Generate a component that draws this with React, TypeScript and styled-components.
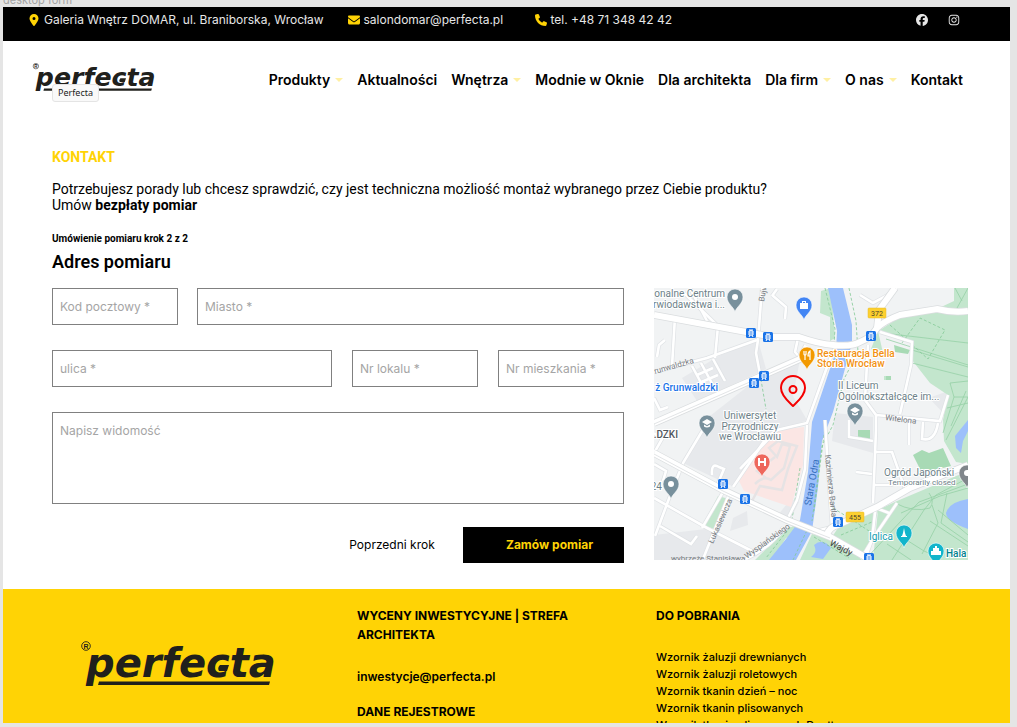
import React from "react";
import styled, { createGlobalStyle } from "styled-components";
import { FaEnvelope, FaFacebook, FaInstagram, FaLocationDot, FaPhone } from "react-icons/fa6";

const yellow = "#ffd305";
const brandFont = `Inter, "Open Sans", sans-serif`;
const bodyFont = `Roboto, "Liberation Sans", sans-serif`;

const GlobalStyle = createGlobalStyle`
  * { box-sizing: border-box; }
  body { margin: 0; background: #e5e5e5; color: #000; font-family: ${bodyFont}; }
  h1, h2, h3, p, ul { margin: 0; padding: 0; }
  ul { list-style: none; }
  a { color: inherit; text-decoration: none; }
`;

const Canvas = styled.div`
  display: flex;
  flex-direction: column;
  height: 100vh;
  padding: 0 7px 4px 3px;
  overflow: hidden;
`;

const FrameLabel = styled.div`
  display: flex;
  align-items: flex-end;
  height: 7px;
  flex: none;
  overflow: hidden;
  color: #a3a3a3;
  font: 11px/14px ${brandFont};
`;

const Frame = styled.div`
  flex: 1;
  min-height: 0;
  overflow: hidden;
  background: #fff;
`;

const TopBar = styled.div`
  display: flex;
  align-items: flex-start;
  height: 34px;
  padding: 4px 50px 0 25px;
  background: #000;
  color: #e6e6e6;
  font: 400 12px/18px ${brandFont};
`;

const ContactItem = styled.a`
  display: flex;
  align-items: center;
  gap: 4px;
  min-width: 163px;
  margin-right: 24px;
  white-space: nowrap;
  svg { color: ${yellow}; flex: none; }
`;

const Social = styled.div`
  display: flex;
  gap: 20px;
  margin-left: auto;
  a { display: flex; align-items: center; height: 17px; }
`;

const Header = styled.header`
  display: flex;
  align-items: center;
  justify-content: space-between;
  height: 79px;
  padding: 0 47px 2px 29px;
`;

const LogoLink = styled.a`
  position: relative;
  display: block;
  margin-bottom: 4px;
  svg { display: block; }
`;

const Tooltip = styled.span`
  position: absolute;
  left: 20px;
  top: 21px;
  padding: 0 5px;
  border: 1px solid #e4e4e4;
  border-radius: 3px;
  background: #f9f9f9;
  color: #222;
  font: 9px/16px "Noto Sans", sans-serif;
`;

const Nav = styled.nav`
  display: flex;
  gap: 14px;
  font: 600 14px/20px ${brandFont};
  a { display: flex; align-items: center; gap: 5px; white-space: nowrap; }
`;

const Caret = styled.span`
  border: 4px solid transparent;
  border-top-color: #fff0a3;
  border-bottom: 0;
`;

const Main = styled.main`
  padding: 28px 42px 26px 49px;
`;

const Title = styled.h1`
  color: ${yellow};
  font-size: 14px;
  line-height: 18px;
`;

const Intro = styled.p`
  margin-top: 15px;
  font-size: 14px;
  line-height: 16px;
`;

const Step = styled.p`
  margin-top: 20px;
  font-size: 10px;
  font-weight: 700;
  line-height: 12px;
`;

const FormTitle = styled.h2`
  margin-top: 6px;
  font-size: 18px;
  font-weight: 600;
  line-height: 22px;
`;

const Columns = styled.div`
  display: grid;
  grid-template-columns: 572fr 314fr;
  gap: 30px;
  margin-top: 15px;
`;

const Form = styled.form`
  display: flex;
  flex-direction: column;
`;

const Fields = styled.div<{ $columns: string; $gap: number }>`
  display: grid;
  grid-template-columns: ${(p) => p.$columns};
  gap: ${(p) => p.$gap}px;
  margin-bottom: 25px;
`;

const fieldStyle = `
  display: block;
  width: 100%;
  min-width: 0;
  padding: 0 7px;
  border: 1px solid #808080;
  border-radius: 0;
  background: #fff;
  font: 400 12px/16px ${brandFont};
  &::placeholder { color: #a5a5a5; opacity: 1; }
`;

const Input = styled.input`
  ${fieldStyle}
  height: 37px;
`;

const Message = styled.textarea`
  ${fieldStyle}
  height: 92px;
  padding-top: 10px;
  resize: none;
`;

const Actions = styled.div`
  display: flex;
  justify-content: flex-end;
  gap: 4px;
  margin-top: 23px;
`;

const Button = styled.button<{ $primary?: boolean }>`
  width: ${(p) => (p.$primary ? 161 : 134)}px;
  height: 36px;
  padding: 0 0 0 ${(p) => (p.$primary ? 12 : 0)}px;
  border: 0;
  background: ${(p) => (p.$primary ? "#000" : "transparent")};
  color: ${(p) => (p.$primary ? yellow : "#000")};
  font: ${(p) => (p.$primary ? 700 : 400)} 12px/16px ${brandFont};
`;

const MapSvg = styled.svg`
  display: block;
  width: 100%;
  height: auto;
  font-family: ${bodyFont};
`;

const Footer = styled.footer`
  display: grid;
  grid-template-columns: 198fr 221fr 354fr;
  column-gap: 78px;
  min-height: 160px;
  padding: 17px 0 0 78px;
  background: ${yellow};
  font: 500 11px/17px ${brandFont};
`;

const FooterLogo = styled.div`
  padding-top: 35px;
  svg { display: block; }
`;

const FooterHeading = styled.h3`
  font-size: 12px;
  font-weight: 700;
  line-height: 19px;
`;

const FooterMail = styled.a`
  display: block;
  margin: 23px 0 16px;
  font-size: 12px;
  font-weight: 600;
  line-height: 19px;
`;

const LinkList = styled.ul`
  margin-top: 24px;
  li { height: 17px; }
`;

const Logo = ({ width }: { width: number }) => (
  <svg width={width} height={Math.round(width * 0.235)} viewBox="0 0 196 46" role="img" aria-label="Perfecta">
    <g fill="#20201c">
      <circle cx="5" cy="5" r="4.3" fill="none" stroke="#20201c" strokeWidth="0.9" />
      <text x="5" y="7.6" textAnchor="middle" fontFamily="Liberation Sans, sans-serif" fontWeight="700" fontSize="7">R</text>
      <text x="5" y="36" fontFamily="DejaVu Sans, sans-serif" fontWeight="700" fontStyle="italic" fontSize="40">perfecta</text>
      <path d="M139 24H148L146 30H138Q136 27 139 24Z" />
      <path d="M18 40.5H189L188 44H17Z" />
    </g>
  </svg>
);

type PinProps = { x: number; y: number; color: string; kind?: string };

const Pin = ({ x, y, color, kind = "dot" }: PinProps) => (
  <g transform={`translate(${x} ${y})`}>
    <path d="M0 15C-1 10-8 7-8 0A8 8 0 0 1 8 0C8 7 1 10 0 15Z" fill={color} stroke="#fff" strokeWidth="0.6" />
    {kind === "dot" && <circle r="3" fill="#fff" />}
    {kind === "school" && <path d="M-5-1L0-4L5-1L0 2ZM-3 1.500V3.500Q0 5.500 3 3.500V1.500L0 3.200Z" fill="#fff" />}
    {kind === "bag" && <path d="M-4-2H-2V-4H2V-2H4V4H-4ZM-1-3V-2H1V-3Z" fill="#fff" fillRule="evenodd" />}
    {kind === "food" && <path d="M-3-4V-1Q-3 0-2 0V5M-1-4V-1Q-1 0-2 0M3 5V-4Q1-3 1 1H3" fill="none" stroke="#fff" strokeWidth="1.2" />}
    {kind === "hospital" && <path d="M-3-4V4M3-4V4M-3 0H3" fill="none" stroke="#fff" strokeWidth="2" />}
    {kind === "tower" && <path d="M0-5L1 0L2 3H3V4H-3V3H-2L-1 0Z" fill="#fff" />}
    {kind === "hall" && <path d="M-1-5H1V-3H3V0H5V4H-5V0H-3V-3H-1Z" fill="#fff" />}
  </g>
);

const stops = [[97, 45], [114, 49], [110, 88], [100, 95], [217, 48], [69, 196], [91, 211], [184, 234], [215, 270]];

const mainRoads = [
  "M0 165L69 202L133 232L176 249L213 270",
  "M0 135L146 71L153 58",
  "M0 27L103 46L120 49L145 49Q165 56 179 57Q198 59 206 54Q217 50 223 40Q230 33 246 27L283 21Q299 25 314 23",
  "M223 40L225 22L241 0",
  "M173 247Q175 239 184 237L223 219L256 200L314 177",
];

const sideRoads = [
  "M21 29L18 78", "M36 0L53 33", "M30 5L64 38L61 70", "M0 84L53 70L103 52", "M108 0L104 52L102 65L106 86",
  "M118 7L132 19L131 31M118 8L123 1", "M144 50L141 64L149 73", "M38 78L52 104M47 75L61 101M59 71L71 93M43 87L59 80M45 95L64 87",
  "M3 69L5 57L11 52M0 110L6 122L14 119M0 145L8 151L0 165", "M79 199L113 149L123 142L153 135L173 79L181 59",
  "M153 137L151 181L143 212L133 232", "M86 181L123 142", "M74 209L49 271M69 204L48 240",
  "M0 210L53 240L98 263", "M1 248L16 208L29 175L56 130", "M58 187Q57 174 65 179L70 181L64 195",
  "M129 239Q121 257 92 271", "M0 176L12 183L9 193", "M6 238L37 256L43 248",
  "M214 57L211 112L222 127L222 142L219 215", "M222 127L286 133L294 107", "M226 44L258 54L257 77L246 126",
  "M243 0L232 8L219 15L206 7", "M222 164L238 164L251 201M222 216L218 252L211 271M243 215L220 249L207 271M222 220L235 225",
  "M202 184L218 186M221 197L237 197L245 194M195 132V149L219 153M255 130V157M269 134L268 151Q281 154 284 135",
  "M171 132L174 181L178 239L158 244",
];

const LocationMap = () => (
  <MapSvg viewBox="0 0 314 272" role="img" aria-label="Mapa Wrocławia">
    <rect width="314" height="272" fill="#f1f3f4" />
    <g fill="#e7e9ec">
      <path d="M65 68L104 52L112 81L43 113L28 90Z" />
      <path d="M112 84L146 72L139 108L153 132L124 143L78 198L29 175L56 128Z" />
      <path d="M0 247L52 241L98 263L84 272H0Z" />
      <path d="M181 125L219 129V165L178 153ZM137 211L145 214L136 232L124 227Z" />
      <path d="M79 230L93 223L94 237L76 243ZM275 110L294 103L291 127Z" />
    </g>
    <g fill="#c3e6cd">
      <path d="M226 42L246 29L283 24L314 26V176L302 174L290 153L289 132L294 107L276 95L258 72L257 54Z" />
      <path d="M300 0H314V21L285 20L300 13ZM167 3L177 0L181 50L176 53L176 29L166 25Z" />
      <path d="M314 183V272H219L224 222L243 213ZM184 240L224 222L213 270L178 249ZM146 272L158 246L177 251L211 272Z" />
      <path d="M118 272L132 250L154 241L148 232L133 242L111 262L101 272Z" />
      <path d="M64 208L75 211L60 241L49 237ZM230 88H237V92H230Z" />
      <path d="M224 43L229 65L217 61Z" />
    </g>
    <path d="M174 0H189L198 37V55L189 88L179 124L168 153L164 199L158 243L142 272H115L132 251L146 232L154 184L158 134L182 63L183 43Z" fill="#9dc0fb" />
    <path d="M314 211Q295 214 292 225Q292 233 314 241ZM314 132L301 148L302 160L307 165L309 153L314 143ZM160 257Q169 249 177 260L169 271L157 269Q164 264 160 257Z" fill="#9dc0fb" />
    <path d="M85 193L113 149L123 142L150 139L149 177L137 219L90 203Z" fill="#fbe6e4" />
    <path d="M259 167L268 162L275 165L289 160L297 178L268 185Z" fill="#a8dab5" />
    <path d="M240 57L256 62L254 66L241 64ZM204 142H216V151H204ZM232 88H237V92H232Z" fill="#a8dab5" />
    <path d="M101 196Q110 187 117 192L130 180L136 158L128 156L123 169L115 160L124 153L143 158L134 181L128 202L106 198L98 213M112 190L103 183L121 169" fill="none" stroke="#e6e3e4" strokeWidth="2.500" />
    <g fill="none" stroke="#95d1a6" strokeWidth="0.8">
      <path d="M229 45L314 55M232 51L314 77M258 62L314 79M258 75L314 89M301 0L308 13M314 0L303 20" />
      <path d="M289 145L300 109L296 95L314 93M293 120L314 115M297 138L312 103M292 152L314 109M300 109H314" />
      <path d="M211 272L247 233L265 214L314 196M238 272L270 222L282 207L314 190M247 225L286 208L314 200M243 246L270 263L286 270M233 256L257 272M284 222L314 247M276 233L314 258M278 217L284 235L268 266M293 205L287 235L314 254" />
      <path d="M241 215Q260 225 276 220Q281 213 275 205" />
    </g>
    <g fill="none" stroke="#83c995" strokeWidth="0.8" strokeDasharray="3 2">
      <path d="M171 0L181 41L180 56M195 0L202 33L204 64L190 91L179 137L168 158L158 233M155 238L139 272M146 180L137 238L112 270" />
      <path d="M236 37L274 71L291 42L266 30L248 55M106 86L112 121M179 220L200 233L215 243M160 249L195 270M187 247L218 234M172 132L160 223" />
    </g>
    <g fill="none" stroke="#dfe2e5" strokeWidth="4">{sideRoads.map((d) => <path key={d} d={d} />)}</g>
    <g fill="none" stroke="#fff" strokeWidth="2.600">{sideRoads.map((d) => <path key={d} d={d} />)}</g>
    <g fill="none" stroke="#dadddf" strokeWidth="7.500">{mainRoads.map((d) => <path key={d} d={d} />)}</g>
    <g fill="none" stroke="#fff" strokeWidth="6">{mainRoads.map((d) => <path key={d} d={d} />)}</g>
    <path d="M0 166L69 203L133 233L176 250M0 136L146 72" fill="none" stroke="#dadddf" strokeWidth="0.8" />

    <g fill="#6d7f88" fontSize="10" stroke="#fff" strokeWidth="2" paintOrder="stroke">
      <text x="71" y="9" textAnchor="end">onalne Centrum</text>
      <text x="71" y="20" textAnchor="end">rwiodawstwa i...</text>
      <text x="184" y="101">II Liceum</text>
      <text x="184" y="112">Ogólnokształcące im...</text>
      <text x="96" y="131" textAnchor="middle">Uniwersytet</text>
      <text x="96" y="142" textAnchor="middle">Przyrodniczy</text>
      <text x="96" y="152" textAnchor="middle">we Wrocławiu</text>
      <text x="8" y="202" textAnchor="end">24</text>
      <text x="230" y="188">Ogród Japoński</text>
      <text x="234" y="197" fontSize="8">Temporarily closed</text>
      <g fill="#f29111" fontWeight="500">
        <text x="163" y="69">Restauracja Bella</text>
        <text x="163" y="79">Storia Wrocław</text>
      </g>
      <text x="64" y="103" textAnchor="end" fill="#1a73e8" fontWeight="500">ż Grunwaldzki</text>
      <text x="24" y="150" textAnchor="end" fill="#50565c" fontWeight="500">.DZKI</text>
      <text x="215" y="252" fill="#129eaf">Iglica</text>
      <text x="292" y="269" fill="#00838f" fontWeight="500">Hala</text>
    </g>
    <g fill="#75797e" fontSize="8">
      <text transform="translate(1 86) rotate(-16)">runwaldzka</text>
      <text transform="translate(110 14) rotate(-80)">Bujw</text>
      <text transform="translate(231 132) rotate(7)">Witelona</text>
      <text transform="translate(171 167) rotate(84)">Kazimierza Bartla</text>
      <text transform="translate(59 256) rotate(-66)">Łukasiewicza</text>
      <text transform="translate(93 271) rotate(-36)">Wyspiańskiego</text>
      <text x="17" y="273">wybrzeże Stanisława</text>
      <text transform="translate(157 218) rotate(-80)" fill="#3870bd" fontSize="10">Stara Odra</text>
      <text transform="translate(175 257) rotate(27)" fill="#444" fontSize="9">Wajdy</text>
    </g>

    {[{ x: 214, y: 20, label: "372" }, { x: 192, y: 224, label: "455" }].map(({ x, y, label }) => (
      <g key={label} transform={`translate(${x} ${y})`}>
        <rect width="18" height="10" rx="1" fill="#fdd02f" stroke="#e5b82c" strokeWidth="0.5" />
        <text x="9" y="8" textAnchor="middle" fontSize="7" fill="#4d452d">{label}</text>
      </g>
    ))}
    {stops.map(([x, y]) => (
      <g key={`${x}-${y}`} transform={`translate(${x} ${y})`}>
        <rect x="-5" y="-5" width="10" height="10" rx="1.500" fill="#1a73e8" />
        <path d="M-2-3H2M0-3V-2M-2-2H2V2H-2ZM-2 4L-1 2M2 4L1 2M-2 0H2" fill="none" stroke="#fff" strokeWidth="1" />
      </g>
    ))}
    <Pin x={81} y={9} color="#78909c" />
    <Pin x={150} y={17} color="#4285f4" kind="bag" />
    <Pin x={153} y={67} color="#f29900" kind="food" />
    <Pin x={53} y={135} color="#78909c" kind="school" />
    <Pin x={108} y={174} color="#ee675c" kind="hospital" />
    <Pin x={17} y={196} color="#78909c" />
    <Pin x={201} y={123} color="#78909c" kind="school" />
    <Pin x={250} y={245} color="#12b5cb" kind="tower" />
    <Pin x={282} y={263} color="#12b5cb" kind="hall" />
    <Pin x={313} y={185} color="#80868b" />
    <g fill="none" stroke="#f40000" strokeWidth="2">
      <path d="M139 118C135 114 127 108 127 100A12 12 0 0 1 151 100C151 108 143 114 139 118Z" strokeLinejoin="round" />
      <circle cx="139" cy="101.500" r="3.500" />
    </g>
  </MapSvg>
);

const navItems = [
  { label: "Produkty", menu: true },
  { label: "Aktualności" },
  { label: "Wnętrza", menu: true },
  { label: "Modnie w Oknie" },
  { label: "Dla architekta" },
  { label: "Dla firm", menu: true },
  { label: "O nas", menu: true },
  { label: "Kontakt" },
];

const downloads = [
  "Wzornik żaluzji drewnianych",
  "Wzornik żaluzji roletowych",
  "Wzornik tkanin dzień – noc",
  "Wzornik tkanin plisowanych",
  "Wzornik tkanin plisowanych Duette",
];

export default function App() {
  return (
    <Canvas>
      <GlobalStyle />
      <FrameLabel>desktop form</FrameLabel>
      <Frame>
        <TopBar>
          <ContactItem href="#mapa">
            <FaLocationDot size={12} />
            Galeria Wnętrz DOMAR, ul. Braniborska, Wrocław
          </ContactItem>
          <ContactItem href="mailto:salondomar@perfecta.pl">
            <FaEnvelope size={12} />
            salondomar@perfecta.pl
          </ContactItem>
          <ContactItem href="tel:+48713484242">
            <FaPhone size={12} />
            tel. +48 71 348 42 42
          </ContactItem>
          <Social>
            <a href="#facebook" aria-label="Facebook"><FaFacebook size={12} /></a>
            <a href="#instagram" aria-label="Instagram"><FaInstagram size={12} /></a>
          </Social>
        </TopBar>
        <Header>
          <LogoLink href="#start">
            <Logo width={125} />
            <Tooltip>Perfecta</Tooltip>
          </LogoLink>
          <Nav>
            {navItems.map((item) => (
              <a key={item.label} href="#menu">
                {item.label}
                {item.menu && <Caret />}
              </a>
            ))}
          </Nav>
        </Header>
        <Main>
          <Title>KONTAKT</Title>
          <Intro>
            Potrzebujesz porady lub chcesz sprawdzić, czy jest techniczna możliość montaż wybranego przez Ciebie produktu?
            <br />
            Umów <b>bezpłaty pomiar</b>
          </Intro>
          <Step>Umówienie pomiaru krok 2 z 2</Step>
          <FormTitle>Adres pomiaru</FormTitle>
          <Columns>
            <Form onSubmit={(e) => e.preventDefault()}>
              <Fields $columns="126fr 427fr" $gap={19}>
                <Input placeholder="Kod pocztowy *" aria-label="Kod pocztowy" />
                <Input placeholder="Miasto *" aria-label="Miasto" />
              </Fields>
              <Fields $columns="280fr 126fr 126fr" $gap={20}>
                <Input placeholder="ulica *" aria-label="Ulica" />
                <Input placeholder="Nr lokalu *" aria-label="Nr lokalu" />
                <Input placeholder="Nr mieszkania *" aria-label="Nr mieszkania" />
              </Fields>
              <Message placeholder="Napisz widomość" aria-label="Wiadomość" />
              <Actions>
                <Button type="button">Poprzedni krok</Button>
                <Button type="submit" $primary>Zamów pomiar</Button>
              </Actions>
            </Form>
            <LocationMap />
          </Columns>
        </Main>
        <Footer>
          <FooterLogo><Logo width={196} /></FooterLogo>
          <div>
            <FooterHeading>WYCENY INWESTYCYJNE | STREFA ARCHITEKTA</FooterHeading>
            <FooterMail href="mailto:inwestycje@perfecta.pl">inwestycje@perfecta.pl</FooterMail>
            <FooterHeading>DANE REJESTROWE</FooterHeading>
          </div>
          <div>
            <FooterHeading>DO POBRANIA</FooterHeading>
            <LinkList>
              {downloads.map((name) => (
                <li key={name}><a href="#pobierz">{name}</a></li>
              ))}
            </LinkList>
          </div>
        </Footer>
      </Frame>
    </Canvas>
  );
}
